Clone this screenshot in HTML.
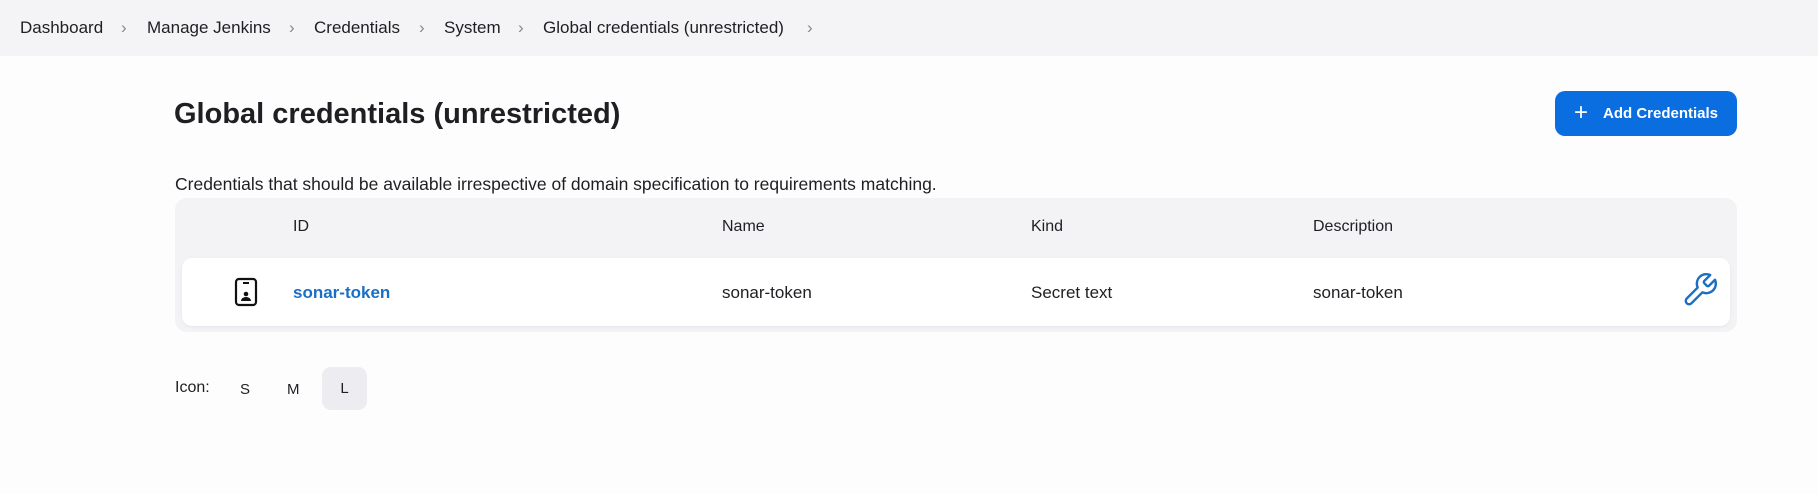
<!DOCTYPE html>
<html><head><meta charset="utf-8"><style>
body{margin:0;width:1818px;height:493px;background:#fdfdfe;font-family:"Liberation Sans",sans-serif;color:#1f1f23;position:relative;overflow:hidden}
.bc{position:absolute;left:0;top:0;width:1818px;height:56px;background:#f4f4f6;}
.bc span{position:absolute;top:18px;font-size:17px}
.a{position:absolute;white-space:nowrap}
</style></head><body>
<div class="bc">
<span style="left:20px">Dashboard</span><span style="left:121px;color:#888">›</span>
<span style="left:147px">Manage Jenkins</span><span style="left:289px;color:#888">›</span>
<span style="left:314px">Credentials</span><span style="left:419px;color:#888">›</span>
<span style="left:444px">System</span><span style="left:518px;color:#888">›</span>
<span style="left:543px">Global credentials (unrestricted)</span><span style="left:807px;color:#888">›</span>
</div>
<div class="a" style="left:174px;top:98px;font-size:29px;font-weight:bold">Global credentials (unrestricted)</div>
<div class="a" style="left:1555px;top:91px;width:182px;height:45px;background:#0b6ee0;border-radius:10px;color:#fff;font-weight:bold;font-size:15px;line-height:45px"><span style="font-weight:normal;font-size:24px;position:absolute;left:19px;top:-1px">+</span><span style="position:absolute;left:48px">Add Credentials</span></div>
<div class="a" style="left:175px;top:174px;font-size:17.5px">Credentials that should be available irrespective of domain specification to requirements matching.</div>
<div class="a" style="left:175px;top:198px;width:1562px;height:134px;background:#f3f3f6;border-radius:12px"></div>
<div class="a" style="left:182px;top:258px;width:1548px;height:68px;background:#fff;border-radius:10px;box-shadow:0 1px 3px rgba(0,0,0,.06)"></div>
<div class="a" style="left:293px;top:218px;font-size:16px">ID</div>
<div class="a" style="left:722px;top:218px;font-size:16px">Name</div>
<div class="a" style="left:1031px;top:218px;font-size:16px">Kind</div>
<div class="a" style="left:1313px;top:218px;font-size:16px">Description</div>
<svg class="a" style="left:234px;top:277px" width="24" height="30" viewBox="0 0 24 30"><rect x="2" y="2" width="20" height="26" rx="3" fill="none" stroke="#111" stroke-width="2.2"/><line x1="9" y1="6" x2="15" y2="6" stroke="#111" stroke-width="2"/><circle cx="12" cy="17" r="2.3" fill="#111"/><path d="M7 24a5 4 0 0 1 10 0z" fill="#111"/></svg>
<div class="a" style="left:293px;top:283px;font-size:17px;font-weight:bold;color:#1a6fc4">sonar-token</div>
<div class="a" style="left:722px;top:283px;font-size:17px">sonar-token</div>
<div class="a" style="left:1031px;top:283px;font-size:17px">Secret text</div>
<div class="a" style="left:1313px;top:283px;font-size:17px">sonar-token</div>
<svg class="a" style="left:1681px;top:271px" width="38" height="38" viewBox="0 0 24 24"><path d="M14.7 6.3a1 1 0 0 0 0 1.4l1.6 1.6a1 1 0 0 0 1.4 0l3.77-3.77a6 6 0 0 1-7.94 7.940l-6.91 6.91a2.12 2.12 0 0 1-3-3l6.91-6.91a6 6 0 0 1 7.94-7.94l-3.76 3.76z" fill="none" stroke="#1a6fc4" stroke-width="1.5" stroke-linejoin="round"/></svg>
<div class="a" style="left:175px;top:379px;font-size:16px">Icon:</div>
<div class="a" style="left:240px;top:381px;font-size:15px">S</div>
<div class="a" style="left:287px;top:381px;font-size:15px">M</div>
<div class="a" style="left:322px;top:367px;width:45px;height:43px;background:#ededf1;border-radius:9px;font-size:15px;text-align:center;line-height:43px">L</div>
</body></html>
